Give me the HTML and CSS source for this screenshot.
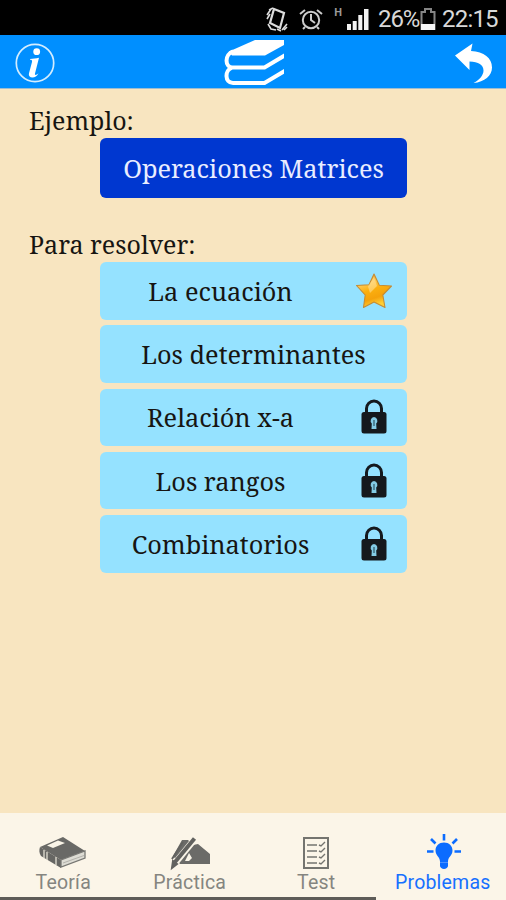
FILE: index.html
```
<!DOCTYPE html>
<html lang="es">
<head>
  <meta charset="UTF-8">
  <meta name="viewport" content="width=device-width, initial-scale=1.0">
  <title>Problemas</title>
  <link rel="stylesheet" href="styles.css">
</head>
<body>

<svg class="defs" width="0" height="0">
  <symbol id="lock" viewBox="0 0 26 36">
    <path d="M5.500 15V9.500a7.500 7.500 0 0 1 15 0V15" fill="none" stroke="#15191d" stroke-width="3"/>
    <rect x=".5" y="13" width="25" height="21.500" rx="2.500" fill="#15191d"/>
    <path d="M13 18a3.800 3.800 0 0 0-2.200 6.500L10.500 30h5l-.3-5.500A3.800 3.800 0 0 0 13 18z" fill="#83cbe4"/>
    <path d="M13 21v6" stroke="#2c5666" stroke-width="1.200"/>
  </symbol>
</svg>

<div class="status">
  <svg class="vibrate" width="24" height="28" viewBox="0 0 24 28" fill="none" stroke="#ddd">
    <path d="M9 4l10 4-4 15-10-5z" stroke-width="2.200"/>
    <path d="M2 10l4-6M2 14l3-5M4 5l4-2M17 25l5-6M19 25l3-3M12 24l4 2M3 19l3 5 5 1" stroke-width="1.600"/>
  </svg>
  <svg class="alarm" width="24" height="24" viewBox="0 0 24 24" fill="none" stroke="#ccc">
    <circle cx="12" cy="13" r="8.200" stroke-width="2"/>
    <path d="M12 7v6l4 3M1 7l5-4M23 7l-5-4M6 20l-2 2M18 20l2 2" stroke-width="2"/>
  </svg>
  <span class="net">H</span>
  <svg class="signal" width="24" height="24" viewBox="0 0 24 24" fill="#f2f2f2">
    <path d="M1 17h4v6H1zM6.700 14h4v9h-4zM12.300 8h4v15h-4zM18 2h4.500v21H18z"/>
  </svg>
  <span class="percent">26%</span>
  <svg class="battery" width="16" height="24" viewBox="0 0 16 24">
    <path d="M1.500 5H5V2h6v3h3.500v17h-13z" fill="none" stroke="#858585" stroke-width="2"/>
    <path d="M1 17h14v6H1z" fill="#f5f5f5"/>
  </svg>
  <span class="clock">22:15</span>
</div>

<header class="topbar">
  <svg class="info" width="42" height="42" viewBox="0 0 42 42">
    <circle cx="21" cy="21" r="18.700" fill="none" stroke="#d3edff" stroke-width="1.700"/>
    <circle cx="22.700" cy="9.700" r="3.400" fill="#fff"/>
    <path d="M16 17c3.200 0 6-.7 9-1.200L21 31.500c-.5 2 1.200 1.800 3.500-.2-1.500 3-3.700 4.200-6 4.200-2.800 0-4.200-1.500-3.500-4.200l3-11.300c.4-1.700-.3-2.200-2-2.200z" fill="#fff"/>
  </svg>
  <svg class="books" width="60" height="48" viewBox="0 0 60 48">
    <path d="M5 12.500L31 1h29v5L41 16.500H8z" fill="#fff"/>
    <path d="M9 12.500C.5 15 .5 28.500 8.500 28.500H40.500L63 15M8 28.500C.5 31 .5 44 9 44h31.500L63 30.500" fill="none" stroke="#fff" stroke-width="4"/>
  </svg>
  <svg class="back" width="40" height="42" viewBox="0 0 40 42">
    <path d="M1 13.500L18.500 1.500 17 9c13 .5 21 7 21 16.500 0 8-7.500 14.500-18.500 15.500 6.500-3.500 10-8 10-12.500 0-6-5-8.500-14-9L15.500 28z" fill="#fff"/>
  </svg>
</header>

<main>
  <h2>Ejemplo:</h2>
  <a class="btn example">Operaciones Matrices</a>

  <h2 class="second">Para resolver:</h2>
  <div class="list">
    <a class="btn"><span>La ecuación</span>
      <svg class="star" width="38" height="38" viewBox="0 0 38 38">
        <defs>
          <linearGradient id="gold" x1="0" y1="0" x2=".35" y2="1">
            <stop offset="0" stop-color="#e99b18"/>
            <stop offset=".35" stop-color="#ffc74d"/>
            <stop offset=".55" stop-color="#fbb010"/>
            <stop offset=".8" stop-color="#f5a20b"/>
            <stop offset="1" stop-color="#ffcf35"/>
          </linearGradient>
        </defs>
        <path d="M19 2l5.300 11.300L36.500 14l-8.700 9 2.200 12.500-11-5.500L8.500 35.500l1.700-12.500L1.500 13.500l12.500-.8z" fill="url(#gold)" stroke="#c48c36" stroke-width="1.100" stroke-linejoin="round"/>
        <path d="M19 5l3 9-7 7-2-6.500z" fill="#ffe4a0" opacity=".55"/>
      </svg>
    </a>
    <a class="btn"><span>Los determinantes</span></a>
    <a class="btn"><span>Relación x-a</span><svg class="lock" width="26" height="36"><use href="#lock"/></svg></a>
    <a class="btn"><span>Los rangos</span><svg class="lock" width="26" height="36"><use href="#lock"/></svg></a>
    <a class="btn"><span>Combinatorios</span><svg class="lock" width="26" height="36"><use href="#lock"/></svg></a>
  </div>
</main>

<nav class="tabs">
  <a class="tab">
    <svg width="50" height="38" viewBox="0 0 50 38">
      <path d="M2 13L25 3l22 14-24 9z" fill="#696966"/>
      <path d="M2 13l21 13v8L3 22c-2-3-2-6-1-9z" fill="#666663"/>
      <path d="M23 26l24-9v7l-24 9z" fill="#dddcd4" stroke="#777773" stroke-width="1.300"/>
      <path d="M25 29l21-7.500" stroke="#b3b2ac"/>
      <path d="M9 11.500l11-5 7 2.500-12 5z" fill="#faf5e8"/>
      <path d="M6 16v8M9 18v8M18 23v8" stroke="#e4e0d5" stroke-width="1.300"/>
    </svg>
    <span>Teoría</span>
  </a>
  <a class="tab">
    <svg width="50" height="38" viewBox="0 0 50 38">
      <path d="M8 22L17 6h6l5 5 5-1 12 10v10H15z" fill="#6b6b68"/>
      <path d="M11 28L29 6" stroke="#faf5e8" stroke-width="6.500"/>
      <path d="M10 28L29.500 4.500" stroke="#62625f" stroke-width="4"/>
      <path d="M7 34l1-7 4 3zM7 25L18 8" fill="#62625f" stroke="#62625f" stroke-width="2"/>
      <path d="M20 27l4-8 3 5-3 3z" fill="#faf5e8"/>
    </svg>
    <span>Práctica</span>
  </a>
  <a class="tab">
    <svg width="50" height="38" viewBox="0 0 50 38" fill="none" stroke="#74746f">
      <path d="M13 4h24v30H13z" stroke-width="2"/>
      <path d="M16 11h10M16 17h10M16 23h10M16 29h10M28 11l2 1 4-4M28 17l2 1 4-4M28 23l2 1 4-4M28 29l2 1 4-4" stroke-width="1.400"/>
    </svg>
    <span>Test</span>
  </a>
  <a class="tab active">
    <svg width="50" height="38" viewBox="0 0 50 38">
      <path d="M26 8.500c-5 0-8.500 3.500-8.500 8 0 5 4.500 6.500 4.500 11v4.500c0 1.500 2 3 4 3s4-1.500 4-3v-4.500c0-4.500 4.500-6 4.500-11 0-4.500-3.500-8-8.500-8z" fill="#0b6cff"/>
      <path d="M26 0v6.500M13 5l4.500 4.500M39 5l-4.500 4.500M9 17.500h6.500M36.500 17.500H43" stroke="#0b6cff" stroke-width="2.600"/>
      <path d="M22 28.500h8" stroke="#5a9bff" stroke-width=".8"/>
    </svg>
    <span>Problemas</span>
  </a>
</nav>
<div class="progress"></div>

</body>
</html>
```

FILE: styles.css
```
* {
  box-sizing: border-box;
}
body {
  margin: 0;
  height: 900px;
  overflow: hidden;
  display: flex;
  flex-direction: column;
  background: #f8e5c0;
  color: #171512;
  font-family: 'Noto Serif', 'Droid Serif', 'DejaVu Serif Condensed', 'DejaVu Serif', serif;
  font-stretch: condensed;
}
svg {
  display: block;
  flex: none;
}
.defs {
  position: absolute;
}

/* barra de estado */
.status {
  flex: none;
  height: 35px;
  background: #000;
  color: #d8d8d8;
  display: flex;
  align-items: center;
  justify-content: flex-end;
  padding: 3px 8px 0 0;
  font: 24px/30px Roboto, sans-serif;
}
.alarm { margin-left: 10px; }
.net {
  margin-left: 11px;
  font-size: 11px;
  font-weight: 700;
  line-height: 12px;
  align-self: flex-start;
  padding-top: 4px;
  color: #999;
}
.signal { margin-left: 4px; }
.percent {
  margin-left: 8px;
  width: 42px;
  letter-spacing: -1.100px;
}
.clock {
  margin-left: 6px;
  width: 56px;
  letter-spacing: -0.800px;
}

.topbar {
  flex: none;
  height: 54px;
  background: #008fff;
  border-bottom: 1px solid #9ebdd0;
  display: flex;
  align-items: center;
  justify-content: space-between;
  padding: 2px 12px 0 14px;
}
.books { margin-left: -2px; }

main {
  flex: 1;
  padding: 15px 0 0;
}
h2 {
  margin: 0 0 2px 29px;
  font-size: 25px;
  line-height: 32px;
  font-weight: 400;
}
h2.second { margin-top: 30px; }
.btn {
  display: flex;
  align-items: center;
  width: 307px;
  height: 57.500px;
  border-radius: 6px;
  background: #95e2ff;
  font-size: 25.300px;
}
.btn span {
  flex: 1;
  text-align: center;
}
.example {
  height: 60px;
  margin-left: 100px;
  justify-content: center;
  background: #0037d0;
  color: #e9edff;
}
.list {
  display: flex;
  flex-direction: column;
  gap: 5.800px;
  margin-left: 100px;
}
.star { margin: 0 14px; }
.lock { margin: 0 20px; }

/* pestañas */
.tabs {
  flex: none;
  height: 84px;
  background: #fbf5e8;
  display: grid;
  grid-template-columns: repeat(4, 1fr);
  font: 19.500px/22px Roboto, sans-serif;
  letter-spacing: 0.200px;
  color: #858580;
}
.tab {
  display: flex;
  flex-direction: column;
  align-items: center;
  padding-top: 21px;
}
.active { color: #1670ff; }
.progress {
  flex: none;
  height: 3px;
  background: linear-gradient(to right, #5e5c58 376px, #fbf5e8 376px);
}
```
